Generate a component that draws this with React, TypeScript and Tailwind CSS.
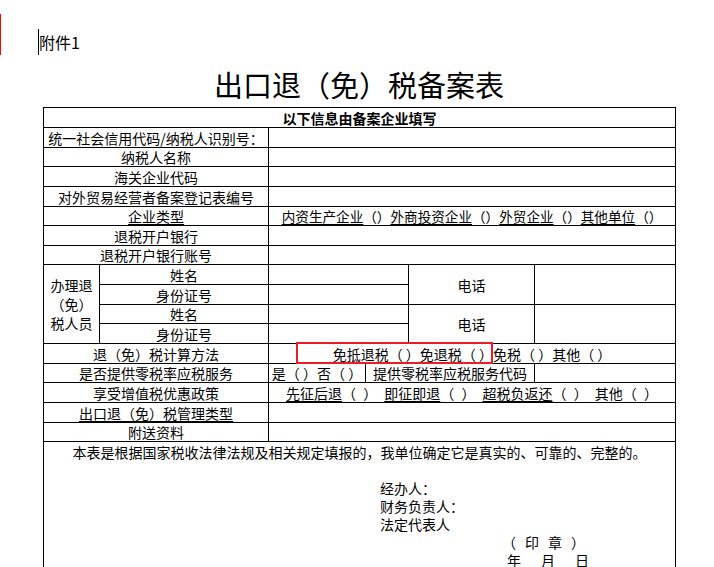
import React from "react";

const cell = "border border-black p-0 text-center align-middle whitespace-nowrap";

function Label({ children, colSpan = 2 }: { children: React.ReactNode; colSpan?: number }) {
  return (
    <td colSpan={colSpan} className={cell}>
      {children}
    </td>
  );
}

export default function App() {
  return (
    <div className="relative h-[567px] w-[714px] overflow-hidden bg-white text-black font-['Noto_Sans_CJK_SC',sans-serif]">
      {/* margin marker */}
      <div className="absolute left-0 top-[14px] h-[41px] w-px bg-[#ff0000]" />

      <div className="mt-[29px] flex h-[26px] items-center pl-[38px]">
        <span className="h-[26px] w-px bg-black" />
        <span className="text-[16px] leading-[26px]">附件1</span>
      </div>

      <h1 className="ml-[43px] mt-[12px] h-[34px] w-[632px] text-center text-[29px] leading-[34px] font-normal">
        出口退（免）税备案表
      </h1>

      <div className="relative ml-[43px] mt-[6px] w-[632px]">
        <table className="w-[632px] table-fixed border-collapse text-[14px] leading-[18px]">
          <colgroup>
            <col className="w-[56px]" />
            <col className="w-[169px]" />
            <col className="w-[97px]" />
            <col className="w-[43px]" />
            <col className="w-[126px]" />
            <col className="w-[141px]" />
          </colgroup>
          <tbody>
            <tr className="h-[20px]">
              <td colSpan={6} className={cell + " font-bold"}>
                以下信息由备案企业填写
              </td>
            </tr>
            <tr className="h-[20px]">
              <Label>统一社会信用代码/纳税人识别号：</Label>
              <td colSpan={4} className={cell} />
            </tr>
            <tr className="h-[19px]">
              <Label>纳税人名称</Label>
              <td colSpan={4} className={cell} />
            </tr>
            <tr className="h-[20px]">
              <Label>海关企业代码</Label>
              <td colSpan={4} className={cell} />
            </tr>
            <tr className="h-[20px]">
              <Label>对外贸易经营者备案登记表编号</Label>
              <td colSpan={4} className={cell} />
            </tr>
            <tr className="h-[19px]">
              <Label>
                <span className="underline underline-offset-2">企业类型</span>
              </Label>
              <td colSpan={4} className={cell + " text-[13.6px]"}>
                <span className="underline underline-offset-2">内资生产企业</span>（）
                <span className="underline underline-offset-2">外商投资企业</span>（）
                <span className="underline underline-offset-2">外贸企业</span>（）
                <span className="underline underline-offset-2">其他单位</span>（）
              </td>
            </tr>
            <tr className="h-[20px]">
              <Label>退税开户银行</Label>
              <td colSpan={4} className={cell} />
            </tr>
            <tr className="h-[19px]">
              <Label>退税开户银行账号</Label>
              <td colSpan={4} className={cell} />
            </tr>
            <tr className="h-[20px]">
              <td rowSpan={4} className={cell + " leading-[19px]"}>
                办理退
                <br />
                （免）
                <br />
                税人员
              </td>
              <td className={cell}>姓名</td>
              <td colSpan={2} className={cell} />
              <td rowSpan={2} className={cell}>
                电话
              </td>
              <td rowSpan={2} className={cell} />
            </tr>
            <tr className="h-[20px]">
              <td className={cell}>身份证号</td>
              <td colSpan={2} className={cell} />
            </tr>
            <tr className="h-[19px]">
              <td className={cell}>姓名</td>
              <td colSpan={2} className={cell} />
              <td rowSpan={2} className={cell}>
                电话
              </td>
              <td rowSpan={2} className={cell} />
            </tr>
            <tr className="h-[20px]">
              <td className={cell}>身份证号</td>
              <td colSpan={2} className={cell} />
            </tr>
            <tr className="h-[20px]">
              <Label>退（免）税计算方法</Label>
              <td colSpan={4} className={cell}>
                免抵退税（ ）免退税（ ）免税（ ）其他（ ）
              </td>
            </tr>
            <tr className="h-[19px]">
              <Label>是否提供零税率应税服务</Label>
              <td className={cell}>是（ ）否（ ）</td>
              <td colSpan={2} className={cell}>
                提供零税率应税服务代码
              </td>
              <td className={cell} />
            </tr>
            <tr className="h-[20px]">
              <Label>享受增值税优惠政策</Label>
              <td colSpan={4} className={cell + " [word-spacing:4px]"}>
                <span className="underline underline-offset-2">先征后退</span>（ ）{" "}
                <span className="underline underline-offset-2">即征即退</span>（ ）{" "}
                <span className="underline underline-offset-2">超税负返还</span>（ ）{" "}
                其他（ ）
              </td>
            </tr>
            <tr className="h-[20px]">
              <Label>
                <span className="underline underline-offset-2">出口退（免）税管理类型</span>
              </Label>
              <td colSpan={4} className={cell} />
            </tr>
            <tr className="h-[19px]">
              <Label>附送资料</Label>
              <td colSpan={4} className={cell} />
            </tr>
            <tr className="h-[150px]">
              <td colSpan={6} className="border border-black p-0 align-top">
                <div className="pt-[1px] text-center leading-[18px]">
                  本表是根据国家税收法律法规及相关规定填报的，我单位确定它是真实的、可靠的、完整的。
                </div>
                <div className="mt-[18px] pl-[336px] leading-[18px]">
                  <div>经办人：</div>
                  <div>财务负责人：</div>
                  <div>法定代表人</div>
                </div>
                <div className="flex gap-[9px] pl-[458px] leading-[18px]">
                  <span>（</span>
                  <span>印</span>
                  <span>章</span>
                  <span>）</span>
                </div>
                <div className="flex gap-[20px] pl-[463px] leading-[18px]">
                  <span>年</span>
                  <span>月</span>
                  <span>日</span>
                </div>
              </td>
            </tr>
          </tbody>
        </table>

        {/* highlight box */}
        <div className="pointer-events-none absolute left-[253px] top-[235px] h-[22px] w-[197px] border-[2px] border-[#ec1c24]" />
      </div>
    </div>
  );
}
